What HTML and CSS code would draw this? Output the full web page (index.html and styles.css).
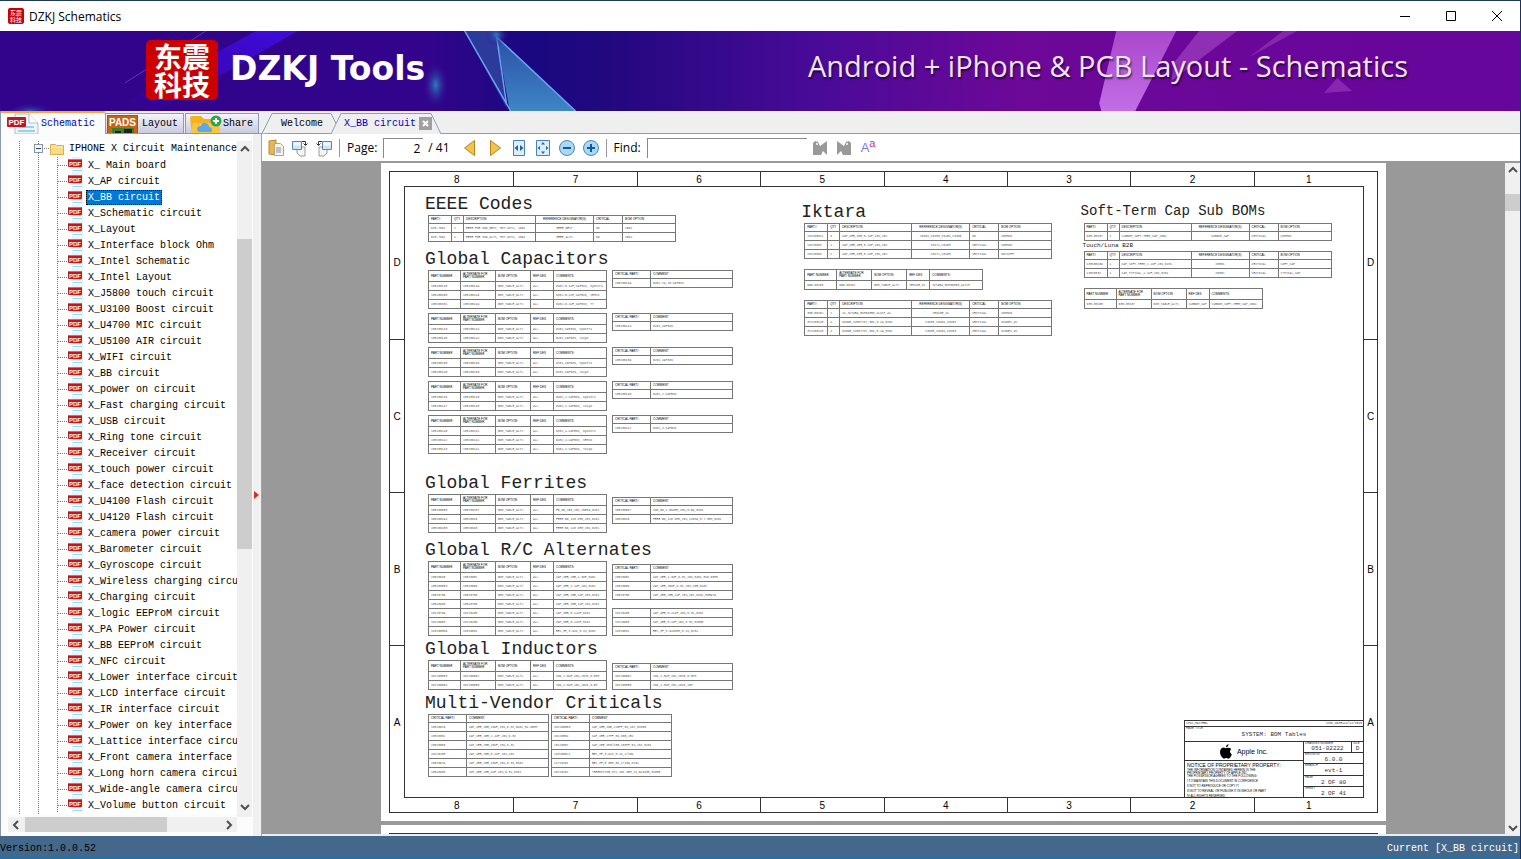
FILE: index.html
```html
<!DOCTYPE html>
<html lang="en">
  <head>
    <meta charset="UTF-8" />
    <meta name="viewport" content="width=device-width, initial-scale=1.0" />
    <title>DZKJ Schematics</title>
    <link rel="stylesheet" href="styles.css">
  </head>
  <body>
    <svg class="symbols" aria-hidden="true">
      <symbol id="pdf" viewBox="0 0 16 16">
        <path d="M5 0h8l3 3v13H5z" fill="#e2f4fb" />
        <path d="M6 10.500h8M6 13.500h9" stroke="#9fd4ea" />
        <path d="M6 12h9M6 15h9" stroke="#fff" />
        <rect x="1" y="2" width="14" height="8" rx="1" fill="#c4161c" />
        <path d="M2 2.500h12" stroke="#e0666a" />
        <text x="8" y="8.500" text-anchor="middle" class="pdf-text">PDF</text>
      </symbol>
      <symbol id="page-turn" viewBox="0 0 18 18">
        <path d="M6 8h8v9H9l-3-3z" fill="#f4f4f4" stroke="#9a9a9a" />
        <path d="M1.500 2.500h9v8h-9z" fill="#cfe4f7" stroke="#5f86b3" />
        <path d="M2.500 3.500h7v3h-7z" fill="#f2f9ff" />
        <path d="M11 2.500h3.500V6M12.500 4.500l2 2 2-2" fill="none" stroke="#333" />
      </symbol>
    </svg>

    <header class="titlebar">
      <div class="seal seal-small"><span>东震</span><span>科技</span></div>
      <h1>DZKJ Schematics</h1>
      <div class="window-buttons">
        <button aria-label="Minimize"><svg width="12" height="12"><path d="M1 6.500h10" stroke="#000" /></svg></button>
        <button aria-label="Maximize"><svg width="12" height="12"><path d="M1.500 1.500h9v9h-9z" fill="none" stroke="#000" /></svg></button>
        <button aria-label="Close"><svg width="12" height="12"><path d="M1 1l10 10M11 1L1 11" stroke="#000" /></svg></button>
      </div>
    </header>

    <div class="banner">
      <svg class="banner-art" viewBox="0 0 1521 80" preserveAspectRatio="none" aria-hidden="true">
        <defs>
          <linearGradient id="beam" x1="1" y1="0" x2="0" y2="1">
            <stop offset="0" stop-color="#3f0be0" />
            <stop offset="0.600" stop-color="#3a08c4" stop-opacity="0.700" />
            <stop offset="1" stop-color="#32058c" stop-opacity="0" />
          </linearGradient>
          <linearGradient id="crystal" x1="0" y1="0" x2="0" y2="1">
            <stop offset="0" stop-color="#2b4fa8" />
            <stop offset="1" stop-color="#3e86c4" />
          </linearGradient>
          <linearGradient id="pink" x1="0" y1="0" x2="0" y2="1">
            <stop offset="0" stop-color="#b04fd0" />
            <stop offset="1" stop-color="#cc78f0" />
          </linearGradient>
          <radialGradient id="glow">
            <stop offset="0" stop-color="#2f7cc0" />
            <stop offset="1" stop-color="#32048c" stop-opacity="0" />
          </radialGradient>
        </defs>
        <path d="M256 0h42L158 80h-48z" fill="url(#beam)" />
        <path d="M206 0L125 52" stroke="#5a3ab8" />
        <ellipse cx="30" cy="80" rx="24" ry="8" fill="url(#glow)" opacity="0.700" />
        <ellipse cx="436" cy="54" rx="13" ry="24" fill="url(#glow)" />
        <path d="M465 0h32l10 77z" fill="#2c3a9c" />
        <path d="M497 6l79 74h-66z" fill="url(#crystal)" />
        <path d="M465 0l46 80M497 6l10 68M497 6l79 74" stroke="#69a4ee" stroke-width="1.500" fill="none" />
        <circle cx="497" cy="4" r="12" fill="url(#glow)" />
        <path d="M1117 0h60l-41 80h-34l-2-8z" fill="url(#pink)" opacity="0.900" />
        <path d="M1200 0h38l-66 50 4-20z" fill="#8f2fb4" />
        <path d="M1284 0h14l-48 26z" fill="#8526ac" />
        <path d="M1338 47l15 13-28 2z" fill="#8826b0" />
      </svg>
      <div class="seal seal-large"><span>东震</span><span>科技</span></div>
      <p class="brand">DZKJ Tools</p>
      <p class="slogan">Android + iPhone &amp; PCB Layout - Schematics</p>
    </div>

    <main class="workspace">
      <section class="side">
        <div class="side-tabs">
          <button class="side-tab active">
            <svg width="33" height="21" viewBox="0 0 33 21">
              <path d="M8 1h14l9 9v11H8z" fill="#eef6fb" stroke="#a9bfcd" />
              <path d="M11 14h16M11 18h17" stroke="#9bd0ea" stroke-width="2" />
              <path d="M22 1v9h9" fill="#fff" stroke="#a9bfcd" />
              <rect x="0" y="4" width="19" height="10" rx="1" fill="#c4161c" />
              <text x="9.500" y="12" text-anchor="middle" class="tab-pdf-text">PDF</text>
            </svg>Schematic
          </button>
          <button class="side-tab layout-tab">
            <svg width="32" height="20" viewBox="0 0 32 20">
              <rect x="0.500" y="1.500" width="30" height="19" fill="#c86414" stroke="#8a5a2a" />
              <path d="M5 14h22v6H5z" fill="#3f7d2a" />
              <path d="M8 17h6v3H8zM17 15h8v5h-8z" fill="#222" />
              <text x="15.500" y="12" text-anchor="middle" class="pads-text">PADS</text>
            </svg>Layout
          </button>
          <button class="side-tab share-tab">
            <svg width="32" height="20" viewBox="0 0 32 20">
              <path d="M0 4q0-2 2-2h9l3 3h14q2 0 2 2v13H2z" fill="#f5b21f" />
              <path d="M3 9h27v11H1z" fill="#fcc53e" />
              <path d="M10 18q-3 0-3-3t4-3q1-4 5-3 3 1 3 4 3 0 3 3t-3 2z" fill="#5ca8ee" />
              <circle cx="26" cy="7" r="5.500" fill="#31a24c" />
              <path d="M26 4v6M23 7h6" stroke="#fff" stroke-width="2" />
            </svg>Share
          </button>
        </div>
        <div class="side-body">
          <div class="tree-box">
            <div class="tree-wrap">
              <div class="tree-root">
                <svg width="32" height="16" viewBox="0 0 32 16">
                  <rect x="1.500" y="3.500" width="8" height="8" fill="#f6f6f6" stroke="#8a94a4" />
                  <path d="M3 7.500h5" stroke="#2b3f78" />
                  <path d="M11 7.500h6" stroke="#808080" stroke-dasharray="1 1" />
                  <path d="M17.500 3.500h5l1 1h7v9h-13z" fill="#f7dc83" stroke="#d8b04c" />
                  <path d="M18 6h12" stroke="#fff0b5" />
                </svg>
                <span>IPHONE X Circuit Maintenance</span>
              </div>
              <ul class="tree" id="tree"></ul>
            </div>
            <div class="vscroll">
              <svg width="10" height="8" viewBox="0 0 10 8"><path d="M1 6l4-4 4 4" /></svg>
              <div class="vthumb"></div>
              <svg width="10" height="8" viewBox="0 0 10 8"><path d="M1 2l4 4 4-4" /></svg>
            </div>
          </div>
          <div class="hscroll">
            <svg width="8" height="10" viewBox="0 0 8 10"><path d="M6 1L2 5l4 4" /></svg>
            <div class="hthumb"></div>
            <svg width="8" height="10" viewBox="0 0 8 10"><path d="M2 1l4 4-4 4" /></svg>
          </div>
        </div>
        <div class="splitter"><svg width="5" height="8"><path d="M0 0l5 4-5 4z" fill="#e02b20" /></svg></div>
      </section>

      <section class="viewer">
        <div class="doc-tabs">
          <button class="doc-tab welcome">
            <svg width="76" height="21" aria-hidden="true"><path d="M0 20.500L10 .5h59l7 14" /></svg>
            <span>Welcome</span>
          </button>
          <div class="doc-tab current">
            <svg width="111" height="22" aria-hidden="true"><path d="M0 21L10 .5h90L110 21" /></svg>
            <button class="doc-name">X_BB circuit</button>
            <button class="doc-close" aria-label="Close tab"><svg width="7" height="7"><path d="M1 1l5 5M6 1L1 6" stroke="#fff" stroke-width="2" /></svg></button>
          </div>
        </div>

        <div class="toolbar">
          <button aria-label="Open">
            <svg width="18" height="18" viewBox="0 0 18 18">
              <path d="M2 2l7-1v15l-7-1z" fill="#e9b54c" stroke="#b98a2e" />
              <path d="M7.500 4.500h6l3 3v9h-9z" fill="#f8f3e4" stroke="#b5a57c" />
              <path d="M9 9h5M9 11h5M9 13h5" stroke="#7d90b4" />
            </svg>
          </button>
          <button aria-label="Rotate right"><svg width="18" height="18"><use href="#page-turn" /></svg></button>
          <button class="flip" aria-label="Rotate left"><svg width="18" height="18"><use href="#page-turn" /></svg></button>
          <i class="separator"></i>
          <label for="page">Page:</label>
          <input class="page-input" type="text" id="page" value="2" />
          <span class="page-total">/ 41</span>
          <button aria-label="Previous page"><svg width="18" height="18"><path d="M14.500 1.500v15L4.500 9z" fill="#f2c34f" stroke="#b88414" /></svg></button>
          <button class="next" aria-label="Next page"><svg width="18" height="18"><path d="M4.500 1.500v15L14.500 9z" fill="#f2c34f" stroke="#b88414" /></svg></button>
          <button aria-label="Fit width">
            <svg width="18" height="18">
              <path d="M3.500 1.500h11v15h-11z" fill="#dceefb" stroke="#4b7fb8" />
              <path d="M8 6v6L4.500 9zM10 6v6l3.500-3z" fill="#1f62b0" />
            </svg>
          </button>
          <button aria-label="Fit page">
            <svg width="18" height="18">
              <path d="M2.500 1.500h13v15h-13z" fill="#dceefb" stroke="#4b7fb8" />
              <path d="M9 3l2 2.500H7zM9 15l2-2.500H7zM3.500 9L6 7v4zM14.500 9L12 7v4z" fill="#1f62b0" />
            </svg>
          </button>
          <button aria-label="Zoom out">
            <svg width="18" height="18">
              <circle cx="9" cy="9" r="7.500" fill="#a9d8f6" stroke="#4a87b8" />
              <path d="M5 9h8" stroke="#12589c" stroke-width="2" />
            </svg>
          </button>
          <button aria-label="Zoom in">
            <svg width="18" height="18">
              <circle cx="9" cy="9" r="7.500" fill="#a9d8f6" stroke="#4a87b8" />
              <path d="M5 9h8M9 5v8" stroke="#12589c" stroke-width="2" />
            </svg>
          </button>
          <i class="separator"></i>
          <label for="find">Find:</label>
          <input class="find-input" type="text" id="find" />
          <button aria-label="Find previous"><svg width="18" height="18"><path d="M2 4l2-2 3 1 2 4 7-5v14l-4-4-2 4H2z" fill="#999" /><circle cx="6" cy="5" r="1" fill="#fff" /></svg></button>
          <button aria-label="Find next"><svg width="18" height="18"><path d="M16 4l-2-2-3 1-2 4-7-5v14l4-4 2 4h8z" fill="#999" /><circle cx="12" cy="5" r="1" fill="#fff" /></svg></button>
          <button class="match-case" aria-label="Match case">A<sup>a</sup></button>
        </div>

        <div class="canvas">
          <div class="pages">
            <article class="sheet">
              <div class="frame">
                <div class="ruler ruler-top"><span>8</span><span>7</span><span>6</span><span>5</span><span>4</span><span>3</span><span>2</span><span>1</span></div>
                <div class="ruler-side"><span>D</span><span>C</span><span>B</span><span>A</span></div>
                <div class="drawing">
                  <div class="column">
                    <h2>EEEE Codes</h2>
                    <div class="boms" data-section="eeee"></div>
                    <h2>Global Capacitors</h2>
                    <div class="boms capacitors" data-section="capacitors"></div>
                    <h2 class="wide">Global Ferrites</h2>
                    <div class="boms" data-section="ferrites"></div>
                    <h2>Global R/C Alternates</h2>
                    <div class="boms" data-section="alternates"></div>
                    <h2 class="tight">Global Inductors</h2>
                    <div class="boms" data-section="inductors"></div>
                    <h2 class="tight">Multi-Vendor Criticals</h2>
                    <div class="boms" data-section="criticals"></div>
                  </div>
                  <div class="column middle">
                    <h2>Iktara</h2>
                    <div class="boms spaced" data-section="iktara"></div>
                  </div>
                  <div class="column last">
                    <h2 class="small">Soft-Term Cap Sub BOMs</h2>
                    <div class="boms" data-section="softterm"></div>
                    <h3>Touch/Luna B2B</h3>
                    <div class="boms spaced" data-section="luna"></div>
                    <div class="title-block">
                      <div class="tb-sync"><span>SYNC_MASTER=</span><span>SYNC_DATE=12/12/2016</span></div>
                      <div class="tb-title"><small>PAGE TITLE</small>SYSTEM: BOM Tables</div>
                      <div class="tb-left">
                        <div class="tb-company">
                          <svg width="12" height="15" viewBox="0 0 12 15"><path d="M8.500 0Q8.500 3 5.800 3.400 6 .8 8.500 0M6 4.300Q9 3 11.300 5q-2.800 2.500.5 5.500-1.500 4-3.300 4.200Q6 13.500 4 14.700.5 13 0 8.500 0 4 3.500 3.500z" /></svg>Apple Inc.
                        </div>
                        <div class="tb-notice">
                          <h4>NOTICE OF PROPRIETARY PROPERTY:</h4>
                          <p>THE INFORMATION CONTAINED HEREIN IS THE<br>PROPRIETARY PROPERTY OF APPLE INC.<br>THE POSSESSOR AGREES TO THE FOLLOWING:</p>
                          <p>I TO MAINTAIN THIS DOCUMENT IN CONFIDENCE</p>
                          <p>II NOT TO REPRODUCE OR COPY IT</p>
                          <p>III NOT TO REVEAL OR PUBLISH IT IN WHOLE OR PART</p>
                          <p>IV ALL RIGHTS RESERVED</p>
                        </div>
                      </div>
                      <div class="tb-right">
                        <div class="tb-number"><div><small>DRAWING NUMBER</small>051-02222</div><div class="tb-size"><small>SIZE</small>D</div></div>
                        <div><small>REVISION</small>6.0.0</div>
                        <div><small>BRANCH</small>evt-1</div>
                        <div><small>PAGE</small>2 OF 80</div>
                        <div><small>SHEET</small>2 OF 41</div>
                      </div>
                    </div>
                  </div>
                </div>
                <div class="ruler-side ruler-right"><span>D</span><span>C</span><span>B</span><span>A</span></div>
                <div class="ruler ruler-bottom"><span>8</span><span>7</span><span>6</span><span>5</span><span>4</span><span>3</span><span>2</span><span>1</span></div>
              </div>
            </article>
            <article class="sheet next-sheet">
              <div class="ruler"><span></span><span></span><span></span><span></span><span></span><span></span><span></span><span></span></div>
            </article>
          </div>
          <div class="page-scroll">
            <svg width="10" height="8" viewBox="0 0 10 8"><path d="M1 6l4-4 4 4" /></svg>
            <div class="page-thumb"></div>
            <svg width="10" height="8" viewBox="0 0 10 8"><path d="M1 2l4 4 4-4" /></svg>
          </div>
        </div>
      </section>
    </main>

    <footer class="statusbar">
      <span class="version">Version:1.0.0.52</span>
      <span>Current [X_BB circuit]</span>
    </footer>
    <script src="script.js"></script>
  </body>
</html>
```
FILE: styles.css
```css
* {
  box-sizing: border-box;
}
body {
  margin: 0;
  height: 100vh;
  display: flex;
  flex-direction: column;
  overflow: hidden;
  border-top: 1px solid #1f3a54;
  border-right: 1px solid #1f2f5c;
  background-color: #efefef;
  font-family: "Liberation Mono", "Noto Sans CJK SC", monospace;
  font-size: 10px;
}
h1,
h2,
h3,
h4,
p,
ul {
  margin: 0;
  padding: 0;
  font-weight: normal;
}
button {
  padding: 0;
  border: 0;
  background: none;
  font: inherit;
  color: inherit;
}
svg {
  display: block;
  flex: none;
}
.symbols {
  position: absolute;
  width: 0;
  height: 0;
}
.pdf-text,
.tab-pdf-text,
.pads-text {
  fill: #fff;
  font-family: "Liberation Sans", sans-serif;
  font-weight: bold;
  font-size: 6px;
}
.tab-pdf-text {
  font-size: 8px;
}
.pads-text {
  font-size: 10px;
}

/* title bar and banner */
.titlebar {
  height: 30px;
  flex: none;
  display: flex;
  align-items: center;
  padding-left: 8px;
  background-color: #fff;
}
.titlebar h1 {
  flex: 1;
  margin-left: 5px;
  font-family: "Open Sans", "Noto Sans", sans-serif;
  font-size: 12px;
}
.window-buttons {
  display: flex;
  gap: 34px;
  padding-right: 17px;
}
.seal {
  display: flex;
  flex-direction: column;
  align-items: center;
  justify-content: center;
  background-color: #cc0000;
  color: #fff;
  font-family: "Noto Sans CJK SC", sans-serif;
  font-weight: bold;
}
.seal-small {
  width: 16px;
  height: 16px;
  border-radius: 2px;
  font-size: 6px;
  font-weight: normal;
  line-height: 7px;
}
.seal-large {
  width: 72px;
  height: 60px;
  margin: 0 0 2px 146px;
  border-radius: 5px;
  font-size: 28px;
  line-height: 28px;
}
.banner {
  height: 80px;
  flex: none;
  display: flex;
  align-items: center;
  position: relative;
  color: #fff;
  background-image: linear-gradient(90deg, #32048c 0%, #32048c 28%, #1a0880 35%, #22087f 40%, #4a0a98 54%, #6d0898 67%, #66069c 100%);
}
.banner-art {
  position: absolute;
  width: 100%;
  height: 100%;
}
.seal-large,
.brand,
.slogan {
  position: relative;
}
.brand {
  margin-left: 12px;
  padding-bottom: 4px;
  font-family: "DejaVu Sans", sans-serif;
  font-size: 33px;
  font-weight: bold;
  line-height: 40px;
}
.slogan {
  margin-left: auto;
  margin-right: 112px;
  padding-bottom: 10px;
  font-family: "Open Sans", "Noto Sans", sans-serif;
  font-size: 29px;
  line-height: 36px;
  color: #f0e4fa;
  text-shadow: 1px 2px 2px rgba(0, 0, 0, 0.6);
}

/* left panel */
.workspace {
  flex: 1;
  min-height: 0;
  display: flex;
}
.side {
  width: 262px;
  flex: none;
  display: grid;
  grid-template-columns: 1fr 9px;
  grid-template-rows: 23px 1fr;
  border-left: 1px solid #8b9aa8;
  background-color: #fcfcfc;
}
.side-tabs {
  grid-column: 1 / 3;
  display: flex;
  align-items: flex-end;
  background-color: #efefef;
  border-bottom: 1px solid #8b9aa8;
}
.side-tab {
  height: 20px;
  display: flex;
  align-items: center;
  gap: 3px;
  overflow: hidden;
  border: 1px solid #8e9bb5;
  border-bottom: 0;
  background-image: linear-gradient(#f4f4fb, #c9cbe0);
}
.side-tab.active {
  width: 104px;
  height: 23px;
  padding-left: 6px;
  gap: 1px;
  margin-bottom: -1px;
  border: 0;
  border-top: 2px solid #f7a63a;
  background: #fcfcfc;
  color: #0000c8;
}
.layout-tab {
  width: 79px;
  padding-left: 1px;
}
.share-tab {
  width: 74px;
  margin-left: 1px;
  padding-left: 4px;
  gap: 1px;
}
.side-body {
  min-width: 0;
  min-height: 0;
  display: flex;
  flex-direction: column;
  padding: 7px 0 4px 7px;
}
.tree-box {
  flex: 1;
  min-height: 0;
  display: flex;
}
.tree-wrap {
  width: 229px;
  height: 674px;
  overflow: hidden;
  background-color: #fff;
  background-image:
    repeating-linear-gradient(#777 0 1px, transparent 1px 2px),
    repeating-linear-gradient(#777 0 1px, transparent 1px 2px);
  background-size: 1px 100%;
  background-repeat: no-repeat;
  background-position: 11px 0, 30px 0;
}
.tree-root {
  display: flex;
  height: 16px;
  padding-left: 25px;
  gap: 4px;
  line-height: 16px;
  white-space: nowrap;
}
.tree {
  list-style: none;
  margin-left: 49px;
  background-image: repeating-linear-gradient(#777 0 1px, transparent 1px 2px);
  background-size: 1px 100%;
  background-repeat: no-repeat;
}
.tree li {
  height: 16px;
  display: flex;
  align-items: center;
}
.tree li::before {
  content: "";
  width: 10px;
  flex: none;
  border-top: 1px dotted #777;
}
.tree a {
  padding: 0 2px;
  margin-left: 3px;
  line-height: 15px;
  white-space: nowrap;
  text-decoration: none;
  color: #000;
}
.tree a.selected {
  background-color: #0078d7;
  color: #fff;
  outline: 1px dotted #000;
  outline-offset: -1px;
}
.vscroll {
  width: 15px;
  display: flex;
  flex-direction: column;
  align-items: center;
  padding: 4px 0 6px;
  background-color: #f0f0f0;
}
.vscroll path,
.hscroll path,
.page-scroll path {
  fill: none;
  stroke: #505050;
  stroke-width: 2;
}
.vthumb {
  width: 100%;
  height: 310px;
  margin: 86px 0 auto;
  background-color: #cdcdcd;
}
.hscroll {
  width: 229px;
  height: 15px;
  flex: none;
  display: flex;
  align-items: center;
  padding: 0 4px;
  margin-top: auto;
  background-color: #f0f0f0;
}
.hthumb {
  width: 142px;
  height: 100%;
  margin: 0 auto 0 5px;
  background-color: #cdcdcd;
}
.splitter {
  display: flex;
  align-items: center;
  padding: 20px 0 0 1px;
  background-color: #f0f0f0;
  border-right: 1px solid #9aa4ac;
}

/* document tabs and toolbar */
.viewer {
  flex: 1;
  min-width: 0;
  display: flex;
  flex-direction: column;
}
.doc-tabs {
  height: 23px;
  flex: none;
  display: flex;
  align-items: flex-end;
  border-bottom: 1px solid #8b9fb4;
}
.doc-tab {
  height: 20px;
  position: relative;
  display: flex;
  align-items: center;
}
.doc-tab > svg {
  position: absolute;
  left: 0;
  top: 0;
  fill: #efefef;
  stroke: #8b9fb4;
}
.doc-tab span,
.doc-tab button {
  position: relative;
}
.welcome {
  width: 69px;
  padding-left: 19px;
}
.current {
  width: 111px;
  padding-left: 13px;
  gap: 3px;
}
.doc-name {
  color: #0000c8;
}
.doc-close {
  width: 13px;
  height: 13px;
  display: flex;
  align-items: center;
  justify-content: center;
  background-color: #a0a0a0;
}
.toolbar {
  height: 29px;
  flex: none;
  display: flex;
  align-items: center;
  padding-left: 5px;
  background-color: #fff;
  border-bottom: 2px solid #999;
  font-family: "Open Sans", "Noto Sans", sans-serif;
  font-size: 12px;
}
.toolbar button {
  width: 24px;
  height: 24px;
  flex: none;
  display: flex;
  align-items: center;
}
.toolbar .flip svg {
  transform: scaleX(-1);
}
.separator {
  width: 1px;
  height: 18px;
  background-color: #999;
}
.toolbar label {
  margin: 0 6px 0 7px;
}
.toolbar input {
  height: 20px;
  padding: 0 3px;
  border: 0;
  border-top: 1px solid #888;
  border-left: 1px solid #888;
  background: #fff;
  font: inherit;
}
.toolbar .page-input {
  width: 40px;
  text-align: right;
}
.page-total {
  margin: 0 10px 0 5px;
}
.toolbar .next {
  margin-left: 2px;
}
.toolbar .find-input {
  width: 160px;
  margin-right: 4px;
}
.toolbar .match-case {
  padding-left: 2px;
  font-family: "Liberation Sans", sans-serif;
  font-size: 13px;
  color: #7a7ae0;
}
.match-case sup {
  align-self: flex-start;
  font-size: 11px;
  line-height: 14px;
  color: #c8329c;
}

/* drawing sheet */
.canvas {
  flex: 1;
  min-height: 0;
  display: flex;
  background-color: #999;
  border-bottom: 2px solid #e8eef4;
}
.pages {
  flex: 1;
  overflow: hidden;
}
.sheet {
  max-width: 1005px;
  height: 658px;
  margin: 0 auto 4px;
  padding: 8px;
  background-color: #fff;
  font-family: "Liberation Sans", sans-serif;
}
.next-sheet {
  height: 24px;
}
.next-sheet .ruler {
  height: 16px;
  border: 1px solid #333;
}
.frame {
  height: 100%;
  display: grid;
  grid-template-columns: 14px 1fr 13px;
  grid-template-rows: 14px 1fr 14px;
  border: 1px solid #333;
}
.ruler {
  grid-column: 1 / 4;
  display: grid;
  grid-template-columns: repeat(8, 1fr);
}
.ruler span,
.ruler-side span {
  display: flex;
  align-items: center;
  justify-content: center;
}
.ruler span + span {
  border-left: 1px solid #333;
}
.ruler span:first-child {
  padding-left: 10px;
}
.ruler span:last-child {
  padding-right: 14px;
}
.ruler-side {
  display: grid;
  grid-template-rows: repeat(4, 1fr);
}
.ruler-side span + span {
  border-top: 1px solid #333;
}
.drawing {
  display: grid;
  grid-template-columns: 397fr 280fr 283fr;
  border: 1px solid #333;
}
.column {
  min-width: 0;
  padding: 7px 0 0 20px;
  display: flex;
  flex-direction: column;
}
.middle {
  padding: 15px 0 0;
}
.last {
  padding: 14px 0 0;
}
h2,
h3 {
  font-family: "Liberation Mono", monospace;
  color: #222;
}
h2 {
  margin-bottom: 1px;
  font-size: 18px;
  line-height: 20px;
  white-space: nowrap;
}
.boms + h2 {
  margin-top: 7px;
}
.boms + h2.tight {
  margin-top: 3px;
}
.boms + h2.wide {
  margin-top: 19px;
}
h2.small {
  margin-bottom: 2px;
  font-size: 14px;
}
h3 {
  margin-left: 2px;
  font-size: 6px;
  line-height: 10px;
}
.boms {
  display: flex;
  flex-direction: column;
  gap: 4px;
  padding-left: 3px;
}
.spaced {
  gap: 10px;
}
.bom-row {
  display: flex;
  align-items: flex-start;
  gap: 5px;
}
.bom-row.vendor {
  gap: 2px;
}
.bom-stack {
  display: flex;
  flex-direction: column;
  gap: 8px;
}
.low {
  padding-top: 3px;
}
table {
  table-layout: fixed;
  border-spacing: 0;
  border-right: 1px solid #777;
  border-bottom: 1px solid #777;
  font-size: 3px;
  line-height: 3px;
}
th,
td {
  height: 9px;
  padding: 0 2px;
  border-top: 1px solid #777;
  border-left: 1px solid #777;
  text-align: left;
  white-space: nowrap;
  overflow: hidden;
}
th {
  height: 8px;
  font-weight: normal;
  color: #000;
}
td {
  font-family: "Liberation Mono", monospace;
  color: #555;
}
.alternate-table {
  width: 179px;
}
.alternate-table th {
  height: 11px;
}
.critical-table {
  width: 121px;
}
.part-table {
  width: 248px;
}
.part-table th:nth-child(4),
.part-table td:nth-child(4) {
  text-align: center;
}

/* title block */
.title-block {
  width: 179px;
  margin-top: auto;
  align-self: flex-end;
  display: grid;
  grid-template-columns: 118px 1fr;
  grid-template-rows: 5px 15px 56px;
  border-top: 1px solid #333;
  border-left: 1px solid #333;
  font-family: "Liberation Mono", monospace;
  font-size: 6px;
  color: #333;
}
.title-block small {
  position: absolute;
  left: 1px;
  top: 0;
  font-family: "Liberation Sans", sans-serif;
  font-size: 3px;
  line-height: 3px;
}
.tb-sync {
  grid-column: 1 / 3;
  display: flex;
  justify-content: space-between;
  padding: 0 1px;
  font-size: 3px;
  line-height: 5px;
}
.tb-title {
  grid-column: 1 / 3;
  position: relative;
  border-top: 1px solid #333;
  text-align: center;
  line-height: 15px;
}
.tb-left {
  border-top: 1px solid #333;
  font-family: "Liberation Sans", sans-serif;
  color: #000;
}
.tb-company {
  height: 19px;
  display: flex;
  align-items: center;
  justify-content: center;
  gap: 5px;
  font-size: 7px;
  border-bottom: 1px solid #333;
}
.tb-notice {
  padding: 1px 2px;
  font-size: 3px;
  line-height: 3px;
}
.tb-notice h4 {
  font-size: 5px;
  line-height: 7px;
}
.tb-notice p {
  margin-bottom: 2px;
}
.tb-right {
  display: grid;
  grid-template-rows: repeat(5, 1fr);
  border-left: 1px solid #333;
}
.tb-right > div {
  position: relative;
  border-top: 1px solid #333;
  padding-top: 3px;
  text-align: center;
  line-height: 7px;
}
.tb-right > .tb-number {
  display: grid;
  grid-template-columns: 1fr 12px;
  padding-top: 0;
}
.tb-number > div {
  position: relative;
  padding-top: 3px;
}
.tb-size {
  border-left: 1px solid #333;
}
.page-scroll {
  width: 15px;
  display: flex;
  flex-direction: column;
  align-items: center;
  padding: 3px 0 2px;
  background-color: #f0f0f0;
}
.page-thumb {
  width: 100%;
  height: 17px;
  margin: 20px 0 auto;
  background-color: #cdcdcd;
}

.statusbar {
  height: 23px;
  flex: none;
  display: flex;
  justify-content: space-between;
  align-items: center;
  padding: 4px 1px 0 0;
  border-bottom: 2px solid #0f78b4;
  background-color: #44688c;
  color: #fff;
}
.version {
  color: #000;
}
```
FILE: script.js
```js
const files = [
  "X_ Main board", "X_AP circuit", "X_BB circuit", "X_Schematic circuit", "X_Layout",
  "X_Interface block Ohm", "X_Intel Schematic", "X_Intel Layout", "X_J5800 touch circuit",
  "X_U3100 Boost circuit", "X_U4700 MIC circuit", "X_U5100 AIR circuit", "X_WIFI circuit",
  "X_BB circuit", "X_power on circuit", "X_Fast charging circuit", "X_USB circuit",
  "X_Ring tone circuit", "X_Receiver circuit", "X_touch power circuit",
  "X_face detection circuit", "X_U4100 Flash circuit", "X_U4120 Flash circuit",
  "X_camera power circuit", "X_Barometer circuit", "X_Gyroscope circuit",
  "X_Wireless charging circuit", "X_Charging circuit", "X_logic EEProM circuit",
  "X_PA Power circuit", "X_BB EEProM circuit", "X_NFC circuit", "X_Lower interface circuit",
  "X_LCD interface circuit", "X_IR interface circuit", "X_Power on key interface",
  "X_Lattice interface circuit", "X_Front camera interface", "X_Long horn camera circuit",
  "X_Wide-angle camera circuit", "X_Volume button circuit",
];

document.getElementById("tree").innerHTML = files
  .map((name, i) => `<li><svg width="16" height="16"><use href="#pdf" /></svg><a href="#"${i == 2 ? ' class="selected"' : ""}>${name}</a></li>`)
  .join("");

const kinds = {
  alternate: {
    heads: ["PART NUMBER", "ALTERNATE FOR<br>PART NUMBER", "BOM OPTION", "REF DES", "COMMENTS:"],
    widths: [32, 35, 35, 23, 53],
  },
  critical: { heads: ["CRITICAL PART#", "COMMENT"], widths: [38, 82] },
  part: {
    heads: ["PART#", "QTY", "DESCRIPTION", "REFERENCE DESIGNATOR(S)", "CRITICAL", "BOM OPTION"],
    widths: [23, 12, 72, 58, 29, 53],
  },
};

function table(kind, rows, noHead) {
  const { heads, widths } = kinds[kind];
  const cols = widths.map((w) => `<col style="width: ${w}px">`).join("");
  const head = noHead ? "" : `<thead><tr>${heads.map((h) => `<th>${h}</th>`).join("")}</tr></thead>`;
  const body = rows.map((r) => `<tr>${r.split("|").map((c) => `<td>${c}</td>`).join("")}</tr>`).join("");
  return `<table class="${kind}-table"><colgroup>${cols}</colgroup>${head}<tbody>${body}</tbody></table>`;
}

const row = (...tables) => `<div class="bom-row">${tables.join("")}</div>`;
const alt = (a, b, comment) => `${a}|${b}|BOM_TABLE_ALTS|ALL|${comment}`;

const sections = {
  eeee: table("part", [
    "825-7691|1|EEEE FOR 639_BEST, EVT-DVT1, X891|EEEE_BEST|NO|X891",
    "825-7691|1|EEEE FOR 639_ALTS, EVT-DVT1, X891|EEEE_ALTS|NO|X891",
  ]),
  capacitors:
    row(
      table("alternate", [
        alt("138S00148", "138S00149", "0402-0.1UF,CAPBIN, Kyocera"),
        alt("138S00150", "138S00149", "0402-0.1UF,CAPBIN, SEMCO"),
        alt("138S00151", "138S00149", "0402-0.1UF,CAPBIN, TY"),
      ]),
      table("critical", ["138S00149|0402-TA,15.CAPBIN"])
    ) +
    row(
      table("alternate", [
        alt("138S00143", "138S00144", "0201,CAPBIN, Kyocera"),
        alt("138S00145", "138S00144", "0201,CAPBIN, Taiyo"),
      ]),
      table("critical", ["138S00144|0201,CAPBIN"])
    ) +
    row(
      table("alternate", [
        alt("138S00138", "138S00139", "0201,CAPBIN, Kyocera"),
        alt("138S00140", "138S00139", "0201,CAPBIN, Taiyo"),
      ]),
      table("critical", ["138S00139|0201,CAPBIN"])
    ) +
    row(
      table("alternate", [
        alt("138S00146", "138S00148", "0402,2.CAPBIN, Kyocera"),
        alt("138S00147", "138S00148", "0402,2.CAPBIN, Taiyo"),
      ]),
      table("critical", ["138S00148|0402,2.CAPBIN"])
    ) +
    row(
      table("alternate", [
        alt("138S00140", "138S00141", "0402,4.CAPBIN, Kyocera"),
        alt("138S00142", "138S00141", "0402,4.CAPBIN, SEMCO"),
        alt("138S00143", "138S00141", "0402,4.CAPBIN, Taiyo"),
      ]),
      table("critical", ["138S00141|0402,4.CAPBIN"])
    ),
  ferrites: row(
    table("alternate", [
      alt("155S00068", "155S00207", "FB,BD,150,25%,200MA,0201"),
      alt("155S00194", "155S0610", "FERR BD,120 OHM,25%,0201"),
      alt("155S00200", "155S0610", "FERR BD,120 OHM,25%,0201"),
    ]),
    `<div class="low">${table("critical", ["155S00067|IND,BD,1.5KOHM,25%,0.5A,0201", "155S0610|FERR BD,120 OHM,25%,210MA,0.7 OHM,0201"])}</div>`
  ),
  alternates: row(
    table("alternate", [
      alt("138S0648", "138S0652", "CAP,CER,X5R,4.3UF,0402"),
      alt("138S00003", "138S0986", "CAP,CER,2.2UF,20%,0201"),
      alt("138S0739", "138S0706", "CAP,CER,X5R,1UF,20%,0201"),
      alt("138S0945", "138S0706", "CAP,CER,X5R,1UF,20%,0201"),
      alt("132S0739", "132S0436", "CAP,CER,0.22UF,0201"),
      alt("132S0663", "132S0436", "CAP,CER,0.22UF,0201"),
      alt("118S00009", "118S0631", "RES,MF,3.92K,0.1%,0201"),
    ]),
    `<div class="bom-stack low">${table("critical", [
      "138S0652|CAP,CER,4.3UF,6.3V,20%,0402,H=0.65MM",
      "138S0986|CAP,CER,15UF,6.3V,20%,X5R,0402",
      "138S0706|CAP,CER,X5R,1UF,20%,10V,0201,MURATA",
    ])}${table("critical", [
      "132S0436|CAP,CER,0.22UF,20%,6.3V,0201",
      "132S0663|CAP,CER,0.1UF,10%,6.3V,01005",
      "118S0631|RES,MF,3.92KOHM,0.1%,0201",
    ], true)}</div>`
  ),
  inductors: row(
    table("alternate", [
      alt("152S00653", "152S00652", "IND,1.0UH,20%,2520,0.8MM"),
      alt("152S00654", "152S00655", "IND,1.0UH,20%,2016,0.8M"),
    ]),
    `<div class="low">${table("critical", ["152S00652|IND,1.0UH,20%,2520,0.8MM", "152S00655|IND,1.0UH,20%,2016,1MM"])}</div>`
  ),
  criticals: `<div class="bom-row vendor">${table("critical", [
    "138S0979|CAP,CER,X5R,10UF,20%,6.3V,0402,H=.65MM",
    "138S0831|CAP,CER,X5R,2.2UF,20%,6.3V",
    "138S0863|CAP,CER,X5R,15UF,20%,6.3V",
    "132S0288|CAP,CER,X5R,0.1UF,10%,16V",
    "138S0979|CAP,CER,X5R,10UF,20%,6.3V,0402",
    "138S0936|CAP,CER,X5R,4UF,20%,6.3V,0201",
  ])}${table("critical", [
    "131S00053|CAP,CER,C0G,220PF,5%,10V,01005",
    "131S0804|CAP,CER,27PF,5%,C0G,25V",
    "131S0307|CAP,CER,NP0/C0G,100PF,5%,16V,0201",
    "118S00021|RES,MF,3.92K,0.1%,1/20W",
    "117S0201|RES,MF,0 OHM,5%,1/20W,0201",
    "107S0257|THERMISTOR,NTC,10K OHM,1%,B=3435,01005",
  ])}</div>`,
  iktara:
    table("part", [
      "132S00011|6|CAP,CER,X5R,0.1UF,10%,25V|C3402,C3403,C3404,C3405|NO|COMMON",
      "132S0663|2|CAP,CER,X5R,0.1UF,10%,25V|C3472,C3483|CRITICAL|COMMON",
      "132S0663|2|CAP,CER,X5R,0.1UF,10%,25V|C3472,C3483|CRITICAL|NOSTUFF",
    ]) +
    table("alternate", ["998-00163|998-00162|BOM_TABLE_ALTS|SENSOR_IC|IKTARA,BCM59350,WLCSP"]) +
    table("part", [
      "338-00162|1|IC,IKTARA,BCM59350,WLCSP,A1|SENSOR_IC|CRITICAL|COMMON",
      "371S00125|4|DIODE,SCHOTTKY,30V,0.2A,0201|C3403,C3404,C3403|CRITICAL|DIODES_DS",
      "371S00125|4|DIODE,SCHOTTKY,30V,0.2A,0201|C3403,C3404,C3403|CRITICAL|DIODES_DS",
    ]),
  softterm: table("part", ["685-00157|1|SUBBOM,SOFT-TERM,CAP,X891|SUBBOM_CAP|CRITICAL|COMMON"]),
  luna:
    table("part", [
      "138S00159|1|CAP,SOFT-TERM,2.2UF,20%,0201|C5801|CRITICAL|SOFT_CAP",
      "138S0831|1|CAP,TYPICAL,2.2UF,20%,0201|C5801|CRITICAL|TYPICAL_CAP",
    ]) +
    table("alternate", ["685-00158|685-00157|BOM_TABLE_ALTS|SUBBOM_CAP|SUBBOM,SOFT-TERM,CAP,X891"]),
};

document.querySelectorAll(".boms").forEach((el) => {
  el.innerHTML = sections[el.dataset.section];
});
```
